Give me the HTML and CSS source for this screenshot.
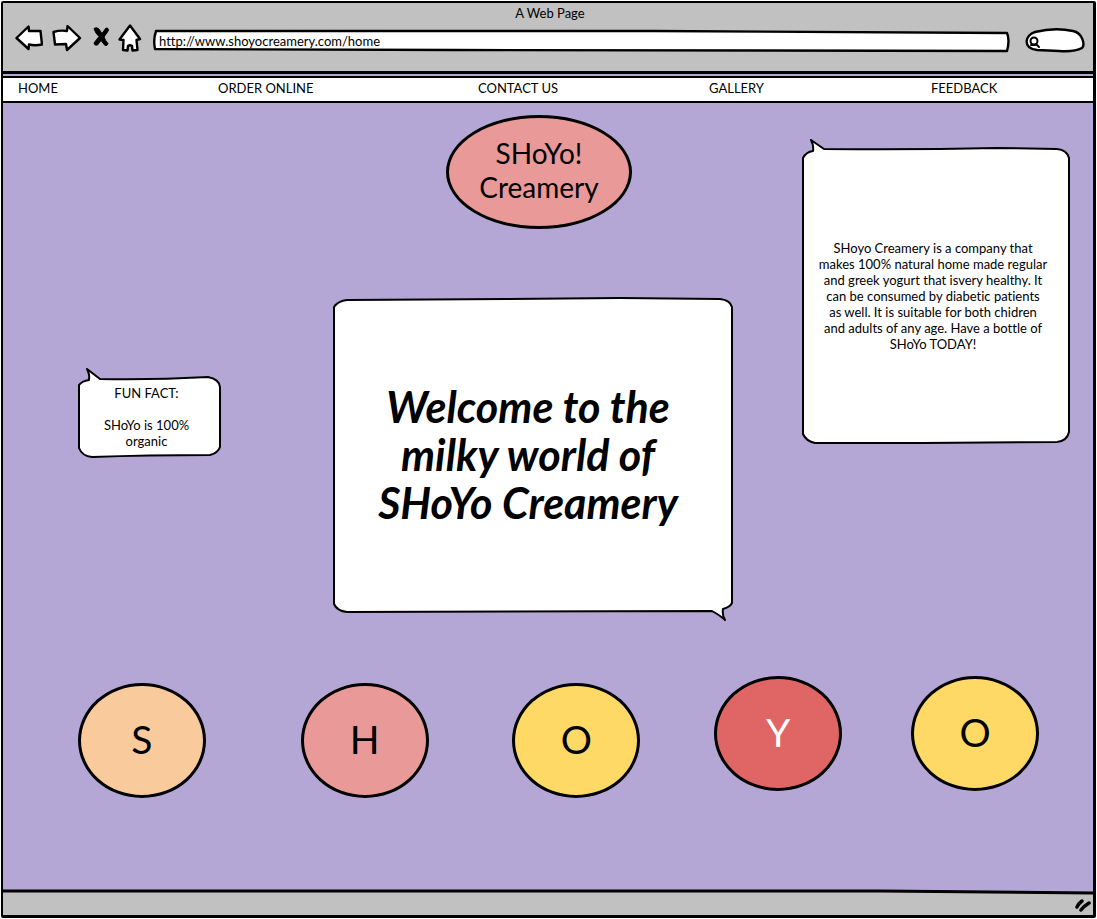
FILE: index.html
```html
<!DOCTYPE html>
<html lang="en">
<head>
<meta charset="utf-8">
<meta name="viewport" content="width=device-width, initial-scale=1">
<title>A Web Page</title>
<link rel="stylesheet" href="styles.css">
</head>
<body>
<div class="browser">
  <header class="chrome">
    <div class="chrome-title">A Web Page</div>
    <div class="toolbar">
      <button class="tool" type="button" aria-label="Back">
        <svg width="28" height="28" viewBox="0 0 28 28"><path class="ink-shape" d="M1.500 14L13.500 2.500L14 7L25.500 7L27 20.500Q20 22 14 20.500L13.500 25Z"/></svg>
      </button>
      <button class="tool tool-forward" type="button" aria-label="Forward">
        <svg width="30" height="28" viewBox="0 0 30 28"><path class="ink-shape" d="M28 14L15.500 2L15 7Q8 6 1.500 8L3 20.500L14 20L15 26Z"/></svg>
      </button>
      <button class="tool tool-stop" type="button" aria-label="Stop">
        <svg width="18" height="28" viewBox="0 0 18 28"><path class="ink-cross" d="M2 4.500Q4 3 6.500 4.500L10 9.500L14 4Q16.500 3.500 16.500 6.500L12 13Q13.500 17 16 19.500Q15.500 22 13 21.500L9 16.500L5.500 21Q2.500 22 2 19L7 12.500Q3 9 2 4.500Z"/></svg>
      </button>
      <button class="tool tool-home" type="button" aria-label="Home">
        <svg width="24" height="28" viewBox="0 0 24 28"><path class="ink-shape" d="M12 1.500L22 15L18.500 16L19.500 26L14.500 26.500L14 22Q12 20.500 10 22L9.500 26.500L5 26L5.500 16L1.500 15.500Z"/></svg>
      </button>
      <div class="sketch address">
        <svg class="outline" viewBox="0 0 856 22" preserveAspectRatio="none" aria-hidden="true"><path d="M3 1Q0 10 2 19L300 20L853 21Q856 10 853 3L500 1Z"/></svg>
        <input class="field" type="text" aria-label="Address" value="http://www.shoyocreamery.com/home">
      </div>
      <div class="sketch search">
        <svg class="outline" viewBox="0 0 60 25" preserveAspectRatio="none" aria-hidden="true"><path d="M10 4Q30 -1 48 3C58 5 60 17 57 20Q50 24 34 23L12 22C-3 20 0 7 10 4Z"/></svg>
        <svg class="lens" width="12" height="13" viewBox="0 0 12 13" aria-hidden="true"><circle cx="5" cy="5" r="3.500"/><path d="M7 8L10 11M2 9L6 9"/></svg>
        <input class="field" type="search" aria-label="Search">
      </div>
    </div>
  </header>

  <nav class="menu">
    <a href="#home">HOME</a>
    <a href="#order">ORDER ONLINE</a>
    <a href="#contact">CONTACT US</a>
    <a href="#gallery">GALLERY</a>
    <a href="#feedback">FEEDBACK</a>
  </nav>

  <main class="page">
    <section class="hero">
      <div class="logo">SHoYo!<br>Creamery</div>
      <aside class="sketch bubble fact">
        <svg class="outline" viewBox="0 0 143 80" preserveAspectRatio="none" aria-hidden="true"><path d="M1 8Q4 4 11 3Q12 -2 9 -8L22 2Q75 3 130 0Q141 2 142 10V70Q140 76 132 78Q70 78 14 80Q4 79 1 71Z"/></svg>
        <p>FUN FACT:<br><br>SHoYo is 100%<br>organic</p>
      </aside>
      <div class="sketch bubble welcome">
        <svg class="outline" viewBox="0 0 400 314" preserveAspectRatio="none" aria-hidden="true"><path d="M1 9Q5 3 14 2L174 1L287 0L387 1Q397 2 399 9V305Q397 309 390 311Q389 317 392 322Q388 318 379 313L14 314Q4 313 1 306Z"/></svg>
        <h1>Welcome to the<br>milky world of<br>SHoYo Creamery</h1>
      </div>
      <div class="sketch bubble about">
        <svg class="outline" viewBox="0 0 268 295" preserveAspectRatio="none" aria-hidden="true"><path d="M1 10Q4 4 11 3Q12 -2 9 -8L22 1Q110 2 195 0L255 1Q265 2 267 10V284Q265 293 255 294L121 295H13Q4 293 1 286Z"/></svg>
        <p>SHoyo Creamery is a company that<br>makes 100% natural home made regular<br>and greek yogurt that isvery healthy. It<br>can be consumed by diabetic patients<br>as well. It is suitable for both chidren<br>and adults of any age. Have a bottle of<br>SHoYo TODAY!</p>
      </div>
    </section>

    <section class="letters">
      <div class="scoop peach">S</div>
      <div class="scoop pink">H</div>
      <div class="scoop yellow">O</div>
      <div class="scoop red raised">Y</div>
      <div class="scoop yellow raised">O</div>
    </section>
  </main>

  <footer class="status">
    <svg class="status-edge" viewBox="0 0 1092 6" preserveAspectRatio="none" aria-hidden="true"><path class="status-sky" d="M0 0H1092V5L890 2H0Z"/><path class="status-line" d="M0 2H880L1092 4"/></svg>
    <svg class="grip" width="18" height="14" viewBox="0 0 18 14" aria-hidden="true"><path d="M3 8Q4 5 8 2M7 11Q10 7 15 4"/></svg>
  </footer>
</div>
</body>
</html>
```

FILE: styles.css
```css
* {
  box-sizing: border-box;
}

body {
  margin: 0;
  background: #fff;
  color: #000;
  font-family: Lato, "Open Sans", sans-serif;
  font-size: 13px;
  font-variant-ligatures: none;
  line-height: 16px;
}

p,
h1 {
  margin: 0;
}

.browser {
  display: flex;
  flex-direction: column;
  min-height: calc(100vh - 2px);
  margin: 1px;
  border: solid #000;
  border-width: 2px 3px 3px 2px;
  border-radius: 2px;
  background: #b4a7d6;
}

/* Browser chrome */
.chrome {
  padding: 2px 8px 18px 12px;
  border-bottom: 3px solid #000;
  background: #c1c1c1;
}

.chrome-title {
  text-align: center;
}

.toolbar {
  display: flex;
  align-items: center;
  padding-top: 2px;
}

.tool {
  display: block;
  flex: none;
  padding: 0;
  border: 0;
  background: none;
}

.tool svg {
  display: block;
}

.tool-forward {
  margin-left: 9px;
}

.tool-stop {
  margin-left: 10px;
}

.tool-home {
  margin-left: 8px;
}

.ink-shape {
  fill: #fff;
  stroke: #000;
  stroke-width: 2.4;
  stroke-linejoin: round;
}

.ink-cross {
  fill: #000;
  stroke: #000;
  stroke-linejoin: round;
}

/* Hand-drawn boxes: a stretched outline behind the content */
.sketch {
  position: relative;
}

.outline {
  position: absolute;
  inset: 0;
  width: 100%;
  height: 100%;
  overflow: visible;
}

.outline path {
  fill: #fff;
  stroke: #000;
  stroke-width: 2;
  stroke-linejoin: round;
  vector-effect: non-scaling-stroke;
}

.field {
  position: relative;
  display: block;
  width: 100%;
  height: 100%;
  padding: 0 6px;
  border: 0;
  background: none;
  color: #000;
  font: inherit;
}

.address {
  flex: 1;
  height: 22px;
  margin: 5px 15px 0 11px;
}

.search {
  flex: none;
  width: 60px;
  height: 25px;
  margin-top: 5px;
}

.search .outline path,
.address .outline path {
  stroke-width: 2.4;
}

.search .field {
  padding-left: 16px;
  appearance: none;
}

.lens {
  position: absolute;
  top: 8px;
  left: 4px;
  fill: none;
  stroke: #000;
  stroke-width: 2;
  stroke-linecap: round;
}

/* Site menu */
.menu {
  display: grid;
  grid-template-columns: 200fr 260fr 231fr 222fr 162fr;
  align-items: center;
  height: 27px;
  margin-top: 2px;
  padding: 0 0 3px 15px;
  border: solid #000;
  border-width: 2px 0;
  background: #fff;
}

.menu a {
  color: inherit;
  text-decoration: none;
}

/* Page */
.page {
  flex: 1;
  padding: 12px 0 91px;
}

.hero {
  display: grid;
  grid-template-columns: 75fr 143px 112fr 400px 69fr 268px 23fr;
  grid-template-rows: auto auto;
  row-gap: 69px;
  align-items: start;
}

.logo {
  grid-area: 1 / 4;
  display: flex;
  align-items: center;
  justify-content: center;
  justify-self: center;
  width: 186px;
  height: 114px;
  margin-left: 12px;
  padding-bottom: 4px;
  border: 3px solid #000;
  border-radius: 50%;
  background: #ea9999;
  font-size: 28px;
  line-height: 34px;
  text-align: center;
}

.bubble {
  display: flex;
  align-items: center;
  justify-content: center;
  text-align: center;
}

.bubble p,
.bubble h1 {
  position: relative;
}

.fact {
  grid-area: 1 / 2 / span 2;
  min-height: 80px;
  margin-top: 262px;
  padding-right: 6px;
}

.welcome {
  grid-area: 2 / 4;
  min-height: 314px;
  padding-right: 10px;
}

.welcome h1 {
  font-size: 43px;
  font-style: italic;
  font-weight: 700;
  line-height: 48px;
}

.about {
  grid-area: 1 / 6 / span 2;
  min-height: 295px;
  margin-top: 33px;
  padding-right: 6px;
  white-space: nowrap;
}

.letters {
  display: grid;
  grid-template-columns: 75fr 128px 95fr 128px 84fr 128px 74fr 128px 69fr 128px 54fr;
  align-items: end;
  margin-top: 64px;
}

.scoop {
  display: flex;
  align-items: center;
  justify-content: center;
  height: 115px;
  padding-bottom: 4px;
  border: 3px solid #000;
  border-radius: 50%;
  font-size: 39px;
  line-height: 48px;
}

.scoop:nth-child(1) { grid-column: 2; }
.scoop:nth-child(2) { grid-column: 4; }
.scoop:nth-child(3) { grid-column: 6; }
.scoop:nth-child(4) { grid-column: 8; }
.scoop:nth-child(5) { grid-column: 10; }

.raised {
  margin-bottom: 7px;
}

.peach {
  background: #f9cb9c;
}

.pink {
  background: #ea9999;
}

.yellow {
  background: #ffd966;
}

.red {
  background: #e06666;
  color: #fff;
}

/* Status bar */
.status {
  display: flex;
  flex-direction: column;
  align-items: flex-end;
  height: 26px;
  background: #c1c1c1;
}

.status-edge {
  display: block;
  width: 100%;
  height: 6px;
}

.status-sky {
  fill: #b4a7d6;
}

.status-line {
  fill: none;
  stroke: #000;
  stroke-width: 3;
  vector-effect: non-scaling-stroke;
}

.grip {
  margin-top: 4px;
  margin-right: 1px;
  fill: none;
  stroke: #000;
  stroke-width: 3.5;
  stroke-linecap: round;
}
```
